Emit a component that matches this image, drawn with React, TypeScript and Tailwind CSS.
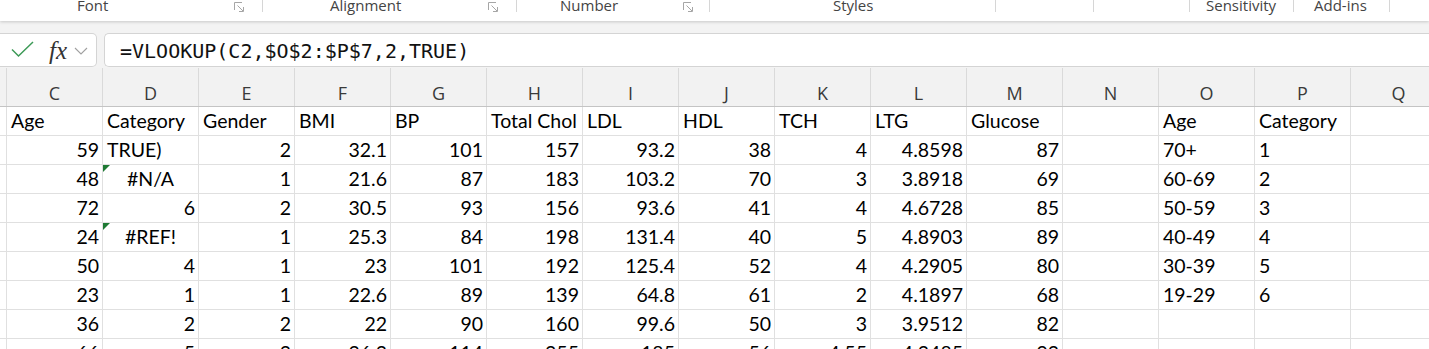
import React from "react";

type Align = "l" | "c" | "r";
type Cell = string | [string, Align] | [string, Align, boolean];

const COLS = ["C", "D", "E", "F", "G", "H", "I", "J", "K", "L", "M", "N", "O", "P", "Q"];

const ROWS: Cell[][] = [
  ["Age", "Category", "Gender", "BMI", "BP", "Total Chol", "LDL", "HDL", "TCH", "LTG", "Glucose", "", "Age", "Category", ""],
  ["59", ["TRUE)", "l"], "2", "32.1", "101", "157", "93.2", "38", "4", "4.8598", "87", "", "70+", ["1", "l"], ""],
  ["48", ["#N/A", "c", true], "1", "21.6", "87", "183", "103.2", "70", "3", "3.8918", "69", "", "60-69", ["2", "l"], ""],
  ["72", "6", "2", "30.5", "93", "156", "93.6", "41", "4", "4.6728", "85", "", "50-59", ["3", "l"], ""],
  ["24", ["#REF!", "c", true], "1", "25.3", "84", "198", "131.4", "40", "5", "4.8903", "89", "", "40-49", ["4", "l"], ""],
  ["50", "4", "1", "23", "101", "192", "125.4", "52", "4", "4.2905", "80", "", "30-39", ["5", "l"], ""],
  ["23", "1", "1", "22.6", "89", "139", "64.8", "61", "2", "4.1897", "68", "", "19-29", ["6", "l"], ""],
  ["36", "2", "2", "22", "90", "160", "99.6", "50", "3", "3.9512", "82", "", "", "", ""],
  ["66", "5", "2", "26.2", "114", "255", "185", "56", "4.55", "4.2485", "92", "", "", "", ""],
];

function norm(c: Cell): [string, Align, boolean] {
  if (typeof c === "string") {
    const isNum = /^-?\d+(\.\d+)?$/.test(c);
    return [c, isNum ? "r" : "l", false];
  }
  return [c[0], c[1], c[2] ?? false];
}

function Launcher() {
  return (
    <svg width="12" height="12" viewBox="0 0 12 12" fill="none" stroke="#a6a6a6" strokeWidth="1">
      <path d="M1.5 9V1.5H9" />
      <path d="M4.5 4.5L10 10" />
      <path d="M10.5 6v4.5H6" />
    </svg>
  );
}

function Group({ w, label, ml, launcherMr }: { w: number; label?: string; ml?: number; launcherMr?: number }) {
  return (
    <>
      <div className="flex shrink-0 items-start" style={{ width: w }}>
        {label && (
          <span className="mt-[-2px] text-[15px] leading-[15px] text-[#444]" style={{ marginLeft: ml }}>
            {label}
          </span>
        )}
        {launcherMr !== undefined && (
          <span className="ml-auto mt-[1px]" style={{ marginRight: launcherMr }}>
            <Launcher />
          </span>
        )}
      </div>
      <div className="h-[12px] w-px shrink-0 bg-[#d6d6d6]" />
    </>
  );
}

export default function App() {
  return (
    <div className="h-[349px] w-[1429px] overflow-hidden bg-[#f3f3f3] font-['Open_Sans',sans-serif]">
      {/* Ribbon group labels */}
      <div className="relative z-10 flex h-[21px] bg-white shadow-[0_1px_3px_rgba(0,0,0,0.18)]">
        <Group w={262} label="Font" ml={77} launcherMr={17} />
        <Group w={253} label="Alignment" ml={67} launcherMr={17} />
        <Group w={192} label="Number" ml={43} launcherMr={15} />
        <Group w={285} label="Styles" ml={123} />
        <Group w={97} />
        <Group w={95} />
        <Group w={103} label="Sensitivity" ml={16} />
        <Group w={95} label="Add-ins" ml={20} />
      </div>

      {/* gap band */}
      <div className="h-[12px]" />

      {/* Formula bar */}
      <div className="flex h-[35px] gap-[7px]">
        <div className="flex h-[34px] w-[97px] shrink-0 items-center rounded-r-[5px] border border-l-0 border-[#d4d4d4] bg-white">
          <svg width="26" height="20" viewBox="0 0 26 20" className="ml-[10px]" fill="none">
            <path d="M2 9.5L8.5 16L23 2" stroke="#3d9a57" strokeWidth="1.5" />
          </svg>
          <span className="ml-[13px] mt-[1px] font-['Liberation_Serif',serif] text-[25px] italic leading-none text-[#333]">
            fx
          </span>
          <svg width="14" height="8" viewBox="0 0 14 8" className="ml-[7px] mt-[2px]" fill="none">
            <path d="M1 1l6 6 6-6" stroke="#a0a0a0" strokeWidth="1.1" />
          </svg>
        </div>
        <div className="flex h-[34px] flex-1 items-center rounded-l-[5px] border border-r-0 border-[#d4d4d4] bg-white">
          <span className="ml-[15px] mt-[2px] font-['DejaVu_Sans_Mono',monospace] text-[20px] text-[#111]">
            =VLOOKUP(C2,$O$2:$P$7,2,TRUE)
          </span>
        </div>
      </div>

      {/* Column headers */}
      <div className="flex h-[39px] border-b border-[#c4c4c4] bg-[#f2f2f2]">
        <div className="h-full w-[7px] shrink-0 border-r border-[#dadada]" />
        {COLS.map((c) => (
          <div
            key={c}
            className="flex h-full w-[96px] shrink-0 items-end justify-center border-r border-[#dadada] pb-[4px] font-['Open_Sans',sans-serif] text-[18px] leading-none text-[#3a3a3a]"
          >
            {c}
          </div>
        ))}
      </div>

      {/* Grid */}
      <div className="bg-white font-['Lato',sans-serif] text-[19.5px] text-black">
        {ROWS.map((row, ri) => (
          <div key={ri} className="flex h-[29px]">
            <div className="h-full w-[7px] shrink-0 border-b border-r border-[#e0e0e0]" />
            {row.map((cell, ci) => {
              const [v, a, tri] = norm(cell);
              const alignCls = a === "r" ? "justify-end pr-[3px]" : a === "c" ? "justify-center" : "justify-start pl-[4px]";
              return (
                <div
                  key={ci}
                  className={`relative flex h-full w-[96px] shrink-0 overflow-hidden whitespace-nowrap border-b border-r border-[#e0e0e0] leading-[28px] ${alignCls}`}
                >
                  {tri && (
                    <span className="absolute left-0 top-0 h-0 w-0 border-r-[7px] border-t-[7px] border-r-transparent border-t-[#1e7a34]" />
                  )}
                  <span>{v}</span>
                </div>
              );
            })}
          </div>
        ))}
      </div>
    </div>
  );
}
